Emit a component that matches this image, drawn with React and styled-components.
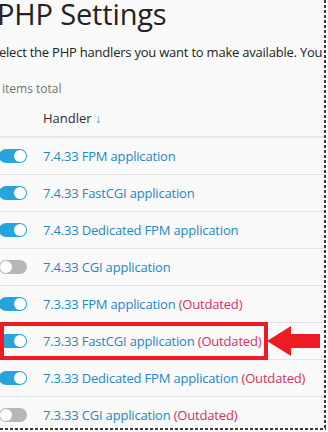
import styled, { createGlobalStyle } from "styled-components";

const GlobalStyle = createGlobalStyle`
  html, body {
    margin: 0;
    padding: 0;
    background: #ffffff;
  }
  body {
    font-family: "Open Sans", "Liberation Sans", sans-serif;
  }
`;

const handlers = [
  { name: "7.4.33 FPM application", on: true },
  { name: "7.4.33 FastCGI application", on: true },
  { name: "7.4.33 Dedicated FPM application", on: true },
  { name: "7.4.33 CGI application", on: false },
  { name: "7.3.33 FPM application", on: true, outdated: true },
  { name: "7.3.33 FastCGI application", on: true, outdated: true, marked: true },
  { name: "7.3.33 Dedicated FPM application", on: true, outdated: true },
  { name: "7.3.33 CGI application", on: false, outdated: true },
];

const App = () => {
  return (
    <>
      <GlobalStyle />
      <Frame>
        <Page>
          <Title>PHP Settings</Title>
          <Intro>Select the PHP handlers you want to make available. You can</Intro>
          <Total>8 items total</Total>
          <HeadRow>
            <HeadCell>
              Handler <SortArrow>↓</SortArrow>
            </HeadCell>
          </HeadRow>
          {handlers.map((h) => (
            <Row key={h.name}>
              <Toggle $on={h.on} />
              <Name>
                {h.name}
                {h.outdated && <Outdated> (Outdated)</Outdated>}
              </Name>
              {h.marked && (
                <>
                  <Highlight />
                  <Arrow viewBox="0 0 53 30" width="53" height="30">
                    <polygon points="0,15 24,0 24,8 53,8 53,22 24,22 24,30" fill="#ed1c24" />
                  </Arrow>
                </>
              )}
            </Row>
          ))}
        </Page>
      </Frame>
    </>
  );
};

const Frame = styled.div`
  position: relative;
  width: 326px;
  height: 430px;
  overflow: hidden;
  background: #fafafa;

  &::before,
  &::after {
    content: "";
    position: absolute;
    z-index: 5;
  }
  &::before {
    top: 0;
    right: 0;
    width: 2px;
    height: 100%;
    background: repeating-linear-gradient(to bottom, #3a3a3a 0 3px, transparent 3px 5px);
  }
  &::after {
    left: 0;
    bottom: 0;
    height: 2px;
    width: 100%;
    background: repeating-linear-gradient(to right, #3a3a3a 0 3px, transparent 3px 5px);
  }
`;

const Page = styled.div`
  display: flex;
  flex-direction: column;
  margin-left: -8px;
  width: 600px;
`;

const Title = styled.h1`
  margin: -3px 0 0 5px;
  font-size: 29px;
  font-weight: 400;
  line-height: 34px;
  color: #222;
  letter-spacing: -0.15px;
`;

const Intro = styled.p`
  margin: 12px 0 0;
  font-size: 13px;
  line-height: 18px;
  color: #222;
  white-space: nowrap;
  letter-spacing: -0.22px;
`;

const Total = styled.div`
  margin-top: 19px;
  font-size: 12px;
  line-height: 18px;
  color: #737373;
`;

const HeadRow = styled.div`
  display: flex;
  align-items: center;
  height: 36px;
  margin-top: 2px;
  border-bottom: 2px solid #e6e6e6;
`;

const HeadCell = styled.div`
  padding-left: 51px;
  font-size: 13px;
  color: #2b2b2b;
`;

const SortArrow = styled.span`
  color: #1a8ac6;
  font-size: 12px;
  font-weight: 700;
`;

const Row = styled.div`
  position: relative;
  display: flex;
  align-items: center;
  height: 36px;
  border-bottom: 1px solid #e3e3e3;
`;

const Toggle = styled.span`
  position: relative;
  flex: none;
  width: 28px;
  height: 14px;
  margin-left: 7px;
  border-radius: 7px;
  background: ${(p) => (p.$on ? "#28a4dc" : "#b7b7b7")};

  &::after {
    content: "";
    position: absolute;
    top: 1px;
    left: ${(p) => (p.$on ? "15px" : "1px")};
    width: 12px;
    height: 12px;
    border-radius: 50%;
    background: #fff;
  }
`;

const Name = styled.span`
  margin-left: 16px;
  font-size: 13px;
  color: #2487c4;
  white-space: nowrap;
  letter-spacing: -0.18px;
`;

const Outdated = styled.span`
  color: #d5305e;
`;

const Highlight = styled.span`
  position: absolute;
  left: 8px;
  top: -1px;
  width: 268px;
  height: 38px;
  box-sizing: border-box;
  border: 4px solid #ed1c24;
`;

const Arrow = styled.svg`
  position: absolute;
  left: 275px;
  top: 3px;
`;

export default App;
